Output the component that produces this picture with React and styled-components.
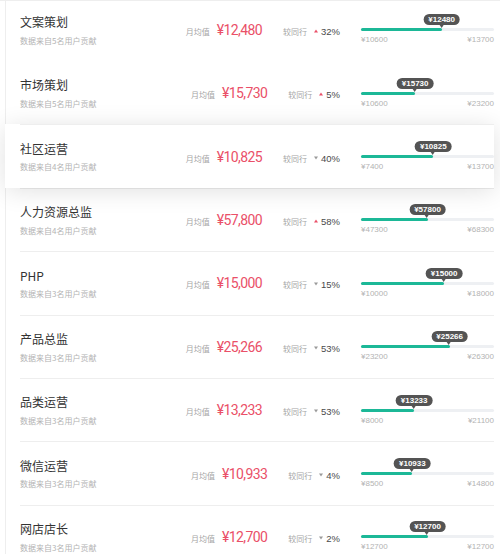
import React from "react";
import styled, { createGlobalStyle, css } from "styled-components";

const GlobalStyle = createGlobalStyle`
  html, body { margin: 0; padding: 0; background: #ffffff; }
  body { font-family: "Liberation Sans", "Noto Sans CJK SC", sans-serif; overflow: hidden; }
`;

const Page = styled.div`
  width: 500px;
  height: 554px;
  overflow: hidden;
  border-top: 1px solid #eeeeee;
  box-sizing: border-box;
`;

const List = styled.ul`
  list-style: none;
  margin: -3.4px 0 0 5px;
  padding: 0;
  width: 488px;
  border-left: 1px solid #eeeeee;
`;

const Item = styled.li`
  height: 63.4px;
  box-sizing: border-box;
  padding-left: 14px;
  ${(p) =>
    p.$active &&
    css`
      position: relative;
      z-index: 1;
      margin-left: -1px;
      padding-left: 15px;
      background: #ffffff;
      box-shadow: 0 3px 24px rgba(0, 0, 0, 0.12);
    `}
`;

const Inner = styled.div`
  height: 100%;
  box-sizing: border-box;
  display: flex;
  align-items: center;
  border-top: 1px solid ${(p) => (p.$line ? "#eeeeee" : "transparent")};
`;

const Info = styled.div`
  flex: 1;
  display: flex;
  flex-direction: column;
`;

const Title = styled.div`
  font-family: "Noto Sans CJK SC", sans-serif;
  font-size: 12px;
  line-height: 16px;
  color: #333333;
`;

const Sub = styled.div`
  margin-top: 4.5px;
  font-family: "Noto Sans CJK SC", sans-serif;
  font-size: 8px;
  line-height: 11px;
  color: #b3b3b3;
`;

const Stats = styled.div`
  display: flex;
  align-items: baseline;
`;

const Label = styled.span`
  font-family: "Noto Sans CJK SC", sans-serif;
  font-size: 8px;
  color: #a6a6a6;
  margin-left: ${(p) => p.$gap || 0}px;
`;

const Amount = styled.span`
  margin-left: 7px;
  font-family: Roboto, sans-serif;
  font-size: 14px;
  color: #ea5068;
  letter-spacing: -0.6px;
`;

const Trend = styled.span`
  margin-left: 7px;
  display: inline-flex;
  align-items: baseline;
  font-family: "Liberation Sans", sans-serif;
  font-size: 9.5px;
  color: #4a4a4a;
`;

const Arrow = styled.span`
  display: inline-block;
  width: 0;
  height: 0;
  margin-right: 3px;
  border-left: 2.5px solid transparent;
  border-right: 2.5px solid transparent;
  transform: translateY(-2.5px);
  ${(p) =>
    p.$up
      ? css`
          border-bottom: 3px solid #ea5068;
        `
      : css`
          border-top: 3px solid #9a9a9a;
        `}
`;

const Range = styled.div`
  width: 133px;
  margin-left: 21px;
  display: flex;
  flex-direction: column;
  padding-top: 14px;
`;

const Track = styled.div`
  position: relative;
  height: 3px;
  border-radius: 2px;
  background: #eef0f3;
`;

const Fill = styled.div`
  height: 100%;
  border-radius: 2px;
  background: #1cb897;
`;

const Tip = styled.div`
  position: absolute;
  bottom: 6px;
  transform: translateX(-50%);
  padding: 0 5px;
  height: 11px;
  line-height: 11px;
  border-radius: 6px;
  background: #545454;
  color: #ffffff;
  font-family: "Liberation Sans", sans-serif;
  font-weight: bold;
  font-size: 8px;
  white-space: nowrap;
  &::after {
    content: "";
    position: absolute;
    left: 50%;
    top: 100%;
    margin-left: -2.5px;
    border-left: 2.5px solid transparent;
    border-right: 2.5px solid transparent;
    border-top: 3px solid #545454;
  }
`;

const Ends = styled.div`
  margin-top: 3px;
  display: flex;
  justify-content: space-between;
  font-family: "Liberation Sans", sans-serif;
  font-size: 8px;
  line-height: 11px;
  color: #b3b3b3;
`;

const rows = [
  { t: "文案策划", n: 5, v: 12480, up: true, p: 32, min: 10600, max: 13700 },
  { t: "市场策划", n: 5, v: 15730, up: true, p: 5, min: 10600, max: 23200 },
  { t: "社区运营", n: 4, v: 10825, up: false, p: 40, min: 7400, max: 13700 },
  { t: "人力资源总监", n: 4, v: 57800, up: true, p: 58, min: 47300, max: 68300 },
  { t: "PHP", n: 3, v: 15000, up: false, p: 15, min: 10000, max: 18000 },
  { t: "产品总监", n: 3, v: 25266, up: false, p: 53, min: 23200, max: 26300 },
  { t: "品类运营", n: 3, v: 13233, up: false, p: 53, min: 8000, max: 21100 },
  { t: "微信运营", n: 3, v: 10933, up: false, p: 4, min: 8500, max: 14800 },
  { t: "网店店长", n: 3, v: 12700, up: false, p: 2, min: 12700, max: 12700 },
];

const fmt = (v) => v.toLocaleString("en-US");

export default function App() {
  return (
    <>
      <GlobalStyle />
      <Page>
        <List>
          {rows.map((r, i) => {
            const pct = r.max === r.min ? 50 : ((r.v - r.min) / (r.max - r.min)) * 100;
            return (
              <Item key={r.t} $active={i === 2}>
                <Inner $line={i >= 2}>
                  <Info>
                    <Title>{r.t}</Title>
                    <Sub>数据来自{r.n}名用户贡献</Sub>
                  </Info>
                  <Stats>
                    <Label>月均值</Label>
                    <Amount>¥{fmt(r.v)}</Amount>
                    <Label $gap={21}>较同行</Label>
                    <Trend>
                      <Arrow $up={r.up} />
                      {r.p}%
                    </Trend>
                  </Stats>
                  <Range>
                    <Track>
                      <Fill style={{ width: `${pct}%` }} />
                      <Tip style={{ left: `${pct}%` }}>¥{r.v}</Tip>
                    </Track>
                    <Ends>
                      <span>¥{r.min}</span>
                      <span>¥{r.max}</span>
                    </Ends>
                  </Range>
                </Inner>
              </Item>
            );
          })}
        </List>
      </Page>
    </>
  );
}
